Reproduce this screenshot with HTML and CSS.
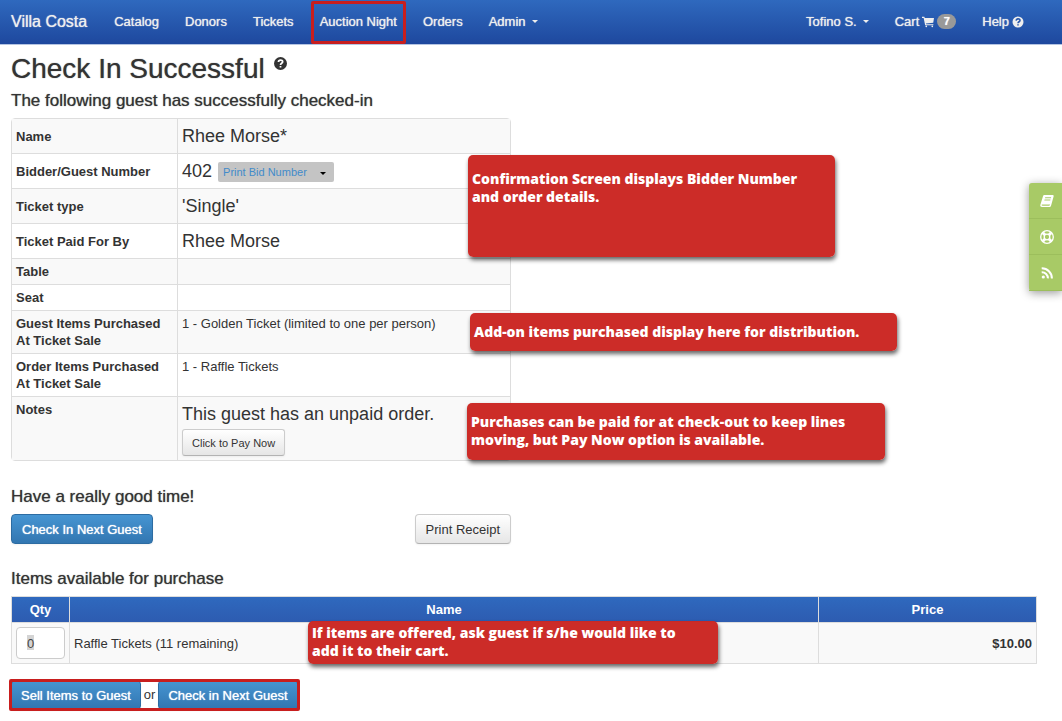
FILE: index.html
```html
<!DOCTYPE html>
<html lang="en">
<head>
    <meta charset="UTF-8">
    <meta name="viewport" content="width=device-width, initial-scale=1.0">
    <title>Check In Successful - Villa Costa</title>
    <link rel="stylesheet" href="styles.css">
</head>
<body>
    <!-- Top navigation -->
    <nav class="navbar">
        <a class="brand" href="#">Villa Costa</a>
        <a href="#">Catalog</a>
        <a href="#">Donors</a>
        <a href="#">Tickets</a>
        <a class="marked" href="#">Auction Night</a>
        <a href="#">Orders</a>
        <a href="#">Admin <span class="caret"></span></a>
        <a class="first-right" href="#">Tofino S. <span class="caret"></span></a>
        <a href="#">Cart
            <svg class="icon" viewBox="0 0 14 12"><path d="M0 0h2.800l.4 1.400H14l-.9 5.400-8.500 1 .2.800h8.500v1.200H3.700L1.900 1.200H0z"/><circle cx="5" cy="11" r="1"/><circle cx="12" cy="11" r="1"/></svg>
            <span class="badge">7</span></a>
        <a href="#">Help
            <svg class="icon" viewBox="0 0 12 12"><circle cx="6" cy="6" r="5.5"/><path class="mark" d="M4.1 4.6C4.2 2.3 8 2.3 8 4.4 8 5.8 6 5.7 6 7.3M6 8.2v1.4"/></svg></a>
    </nav>

    <main class="page">
        <h1>Check In Successful
            <svg class="help" viewBox="0 0 12 12"><circle cx="6" cy="6" r="6"/><path class="mark" d="M4.1 4.6C4.2 2.3 8 2.3 8 4.4 8 5.8 6 5.7 6 7.3M6 8.2v1.4"/></svg>
        </h1>
        <h3>The following guest has successfully checked-in</h3>

        <!-- Guest details -->
        <table class="details">
            <tr class="tall"><th>Name</th><td class="big">Rhee Morse*</td></tr>
            <tr class="tall"><th>Bidder/Guest Number</th><td class="big">402 <button type="button" class="print-bid">Print Bid Number <span class="caret"></span></button></td></tr>
            <tr class="tall"><th>Ticket type</th><td class="big">'Single'</td></tr>
            <tr class="tall"><th>Ticket Paid For By</th><td class="big">Rhee Morse</td></tr>
            <tr><th>Table</th><td></td></tr>
            <tr><th>Seat</th><td></td></tr>
            <tr><th>Guest Items Purchased At Ticket Sale</th><td>1 - Golden Ticket (limited to one per person)</td></tr>
            <tr><th>Order Items Purchased At Ticket Sale</th><td>1 - Raffle Tickets</td></tr>
            <tr><th>Notes</th><td class="big">This guest has an unpaid order.<button type="button" class="btn btn-small">Click to Pay Now</button></td></tr>
        </table>

        <h3>Have a really good time!</h3>
        <div class="actions">
            <button type="button" class="btn btn-primary">Check In Next Guest</button>
            <button type="button" class="btn">Print Receipt</button>
        </div>

        <!-- Items for sale -->
        <h3>Items available for purchase</h3>
        <form>
            <table class="items">
                <thead>
                    <tr><th class="qty">Qty</th><th>Name</th><th class="price">Price</th></tr>
                </thead>
                <tbody>
                    <tr>
                        <td><div class="qty-box"><input type="text" id="qty" value="0"></div></td>
                        <td><label for="qty">Raffle Tickets (11 remaining)</label></td>
                        <td class="amount">$10.00</td>
                    </tr>
                </tbody>
            </table>
            <div class="sell">
                <button type="button" class="btn btn-primary">Sell Items to Guest</button>
                <span>or</span>
                <button type="button" class="btn btn-primary">Check in Next Guest</button>
            </div>
        </form>

        <!-- Callouts over the page -->
        <div class="callout callout-bidder">Confirmation Screen displays Bidder Number<br>and order details.</div>
        <div class="callout callout-addon">Add-on items purchased display here for distribution.</div>
        <div class="callout callout-pay">Purchases can be paid for at check-out to keep lines<br>moving, but Pay Now option is available.</div>
        <div class="callout callout-offer">If items are offered, ask guest if s/he would like to<br>add it to their cart.</div>
    </main>

    <!-- Support tab -->
    <aside class="side-tab">
        <a href="#" aria-label="Guide"><svg viewBox="0 0 14 14"><path fill-rule="evenodd" d="M4.3 1h8.2c1 0 1.4.7 1.1 1.6l-2.5 8.8c-.3 1-.9 1.5-1.9 1.5H2c-1.200 0-2-1-1.700-2L3 2.200C3.200 1.400 3.600 1 4.300 1zM1.800 10.600c-.3.8 0 1.200.7 1.200h6.400c.6 0 .9-.3 1-.8l.2-.6H1.800zM5.200 3.300l-.2.9h5.900l.3-.9zM4.600 5.500l-.3.9h5.900l.3-.9z"/></svg></a>
        <a href="#" aria-label="Support"><svg viewBox="0 0 14 14"><circle class="ring" cx="7" cy="7" r="6.300"/><circle class="ring" cx="7" cy="7" r="2.800"/><path class="spokes" d="M2.800 2.800l2 2M11.200 2.800l-2 2M2.800 11.200l2-2M11.200 11.200l-2-2"/></svg></a>
        <a href="#" aria-label="News"><svg viewBox="0 0 14 14"><circle cx="3.300" cy="11" r="1.600"/><path class="wave" d="M1.700 6.200a6 6 0 0 1 6.200 6.200M1.700 2.300a10 10 0 0 1 10.200 10.100"/></svg></a>
    </aside>
</body>
</html>
```
FILE: styles.css
```css
/* General Styling */
body {
    margin: 0;
    font-family: "Liberation Sans", Arial, sans-serif;
    font-size: 13px;
    line-height: 17px;
    color: #333;
    background: #fff;
}
* {
    box-sizing: border-box;
}
button, input {
    font-family: inherit;
}

/* Navbar */
.navbar {
    display: flex;
    align-items: center;
    gap: 26px;
    height: 45px;
    padding: 0 38px 1px 11px;
    background: linear-gradient(to bottom, #2f69be, #1e489e);
    border-bottom: 1px solid #b4c4e2;
}
.navbar a {
    position: relative;
    display: flex;
    align-items: center;
    color: #eee;
    text-decoration: none;
    white-space: nowrap;
    text-shadow: 0 0 1px #eee;
}
.navbar .brand {
    margin-right: 1px;
    font-size: 16px;
}
.navbar .first-right {
    margin-left: auto;
}
.marked::after {
    content: "";
    position: absolute;
    inset: -12px -9px -14px;
    border: 3px solid #c81e1e;
    border-radius: 2px;
}
.caret {
    display: inline-block;
    margin-left: 6px;
    border-top: 3px solid;
    border-left: 3px solid transparent;
    border-right: 3px solid transparent;
}
.icon {
    width: 12px;
    height: 12px;
    margin-left: 3px;
    fill: #eee;
}
.icon .mark {
    fill: none;
    stroke: #2857ab;
    stroke-width: 1.6;
}
.badge {
    width: 19px;
    margin-left: 3px;
    border-radius: 8px;
    background: #999;
    color: #fff;
    font-size: 11px;
    font-weight: bold;
    line-height: 15px;
    text-align: center;
}

/* Headings */
.page {
    position: relative;
    padding: 6px 25px 10px 11px;
}
h1, h3 {
    margin: 0;
    font-weight: normal;
    text-shadow: 0 0 1px #666;
}
h1 {
    font-size: 28px;
    line-height: 36px;
    margin-bottom: 4px;
}
h3 {
    font-size: 17px;
    line-height: 20px;
    margin-bottom: 7px;
}
.help {
    width: 13px;
    height: 13px;
    margin-left: 2px;
    vertical-align: 8px;
    fill: #333;
}
.help .mark {
    fill: none;
    stroke: #fff;
    stroke-width: 1.6;
}

/* Guest details */
.details {
    width: 100%;
    max-width: 500px;
    margin-bottom: 26px;
    border: 1px solid #ddd;
    border-radius: 4px;
    border-spacing: 0;
}
.details th, .details td {
    padding: 4px;
    text-align: left;
    vertical-align: top;
    border-top: 1px solid #ddd;
}
.details th {
    width: 165px;
    padding-right: 12px;
}
.details .tall th {
    vertical-align: middle;
}
.details tr:first-child > * {
    border-top: none;
}
.details td {
    border-left: 1px solid #ddd;
}
.details tr:nth-child(odd) > * {
    background: #f9f9f9;
}
.details .big {
    font-size: 18px;
    line-height: 26px;
}
.print-bid {
    height: 20px;
    margin-left: 1px;
    padding: 0 8px 0 5px;
    border: none;
    border-radius: 2px;
    background: #c4c4c4;
    color: #428bca;
    font-size: 11px;
    vertical-align: middle;
}
.print-bid .caret {
    margin-left: 10px;
    color: #000;
    vertical-align: middle;
}

/* Buttons */
.btn {
    height: 30px;
    padding: 0 10px;
    border: 1px solid #ccc;
    border-bottom-color: #b3b3b3;
    border-radius: 4px;
    background: linear-gradient(to bottom, #fff, #e6e6e6);
    box-shadow: 0 1px 2px rgba(0, 0, 0, 0.05);
    color: #333;
    font-size: 13px;
}
.btn-primary {
    border-color: #2d6ca2;
    background: linear-gradient(to bottom, #4695d2, #3276b1);
    color: #fff;
    text-shadow: 0 0 1px #fff;
}
.btn-small {
    display: block;
    height: 27px;
    margin-top: 2px;
    padding: 0 9px;
    border-radius: 3px;
    font-size: 11px;
}
.actions {
    display: flex;
    justify-content: space-between;
    max-width: 500px;
    margin: 7px 0 25px;
}

/* Items for sale */
.items {
    width: 100%;
    border-collapse: collapse;
}
.items th, .items td {
    padding: 4px;
    border: 1px solid #ddd;
}
.items thead tr {
    background: linear-gradient(to bottom, #2f69be, #2d5bb0);
    color: #fff;
}
.items tbody td {
    background: #f9f9f9;
}
.items .qty {
    width: 58px;
}
.items .price {
    width: 218px;
}
.items .amount {
    font-weight: bold;
    text-align: right;
}
.items input {
    display: block;
    width: 49px;
    height: 32px;
    padding: 0 10px;
    border: 1px solid #ccc;
    border-radius: 4px;
    color: #555;
    font-size: 13px;
}
/* selected quantity */
.qty-box {
    position: relative;
}
.qty-box::after {
    content: "";
    position: absolute;
    top: 8px;
    left: 11px;
    width: 7px;
    height: 15px;
    background: rgba(0, 0, 0, 0.17);
    pointer-events: none;
}
.sell {
    position: relative;
    display: flex;
    width: fit-content;
    margin-top: 16px;
}
.sell .btn {
    padding: 0 9px;
}
.sell span {
    padding: 6px 3px;
}
.sell::after {
    content: "";
    position: absolute;
    inset: -1px -2px;
    border: 3px solid #c81e1e;
    border-radius: 2px;
    pointer-events: none;
}

/* Callouts */
.callout {
    position: absolute;
    display: flex;
    align-items: center;
    padding: 0 4px 1px;
    border-radius: 5px;
    background: rgba(203, 40, 36, 0.98);
    box-shadow: 1px 3px 4px rgba(0, 0, 0, 0.6);
    color: #fff;
    font-family: "Open Sans", sans-serif;
    font-size: 14px;
    font-weight: 800;
    line-height: 18px;
    white-space: nowrap;
}
.callout-bidder {
    top: 110px;
    left: 468px;
    width: 367px;
    height: 102px;
    padding-bottom: 37px;
}
.callout-addon {
    top: 268px;
    left: 470px;
    width: 427px;
    height: 38px;
}
.callout-pay {
    top: 358px;
    left: 467px;
    width: 418px;
    height: 57px;
}
.callout-offer {
    top: 576px;
    left: 308px;
    width: 410px;
    height: 43px;
}

/* Support tab */
.side-tab {
    position: fixed;
    top: 183px;
    right: 0;
    width: 33px;
    border-radius: 3px 0 0 3px;
    background: #a8ca66;
    box-shadow: 0 2px 10px rgba(0, 0, 0, 0.4);
}
.side-tab a {
    display: flex;
    align-items: center;
    justify-content: center;
    height: 36px;
    padding-left: 3px;
    border-bottom: 1px solid #9cbe5c;
}
.side-tab svg {
    width: 14px;
    height: 14px;
    fill: #fff;
}
.side-tab .ring, .side-tab .spokes, .side-tab .wave {
    fill: none;
    stroke: #fff;
    stroke-width: 1.3;
}
.side-tab .spokes {
    stroke-width: 3;
}
.side-tab .wave {
    stroke-width: 2;
}
```
